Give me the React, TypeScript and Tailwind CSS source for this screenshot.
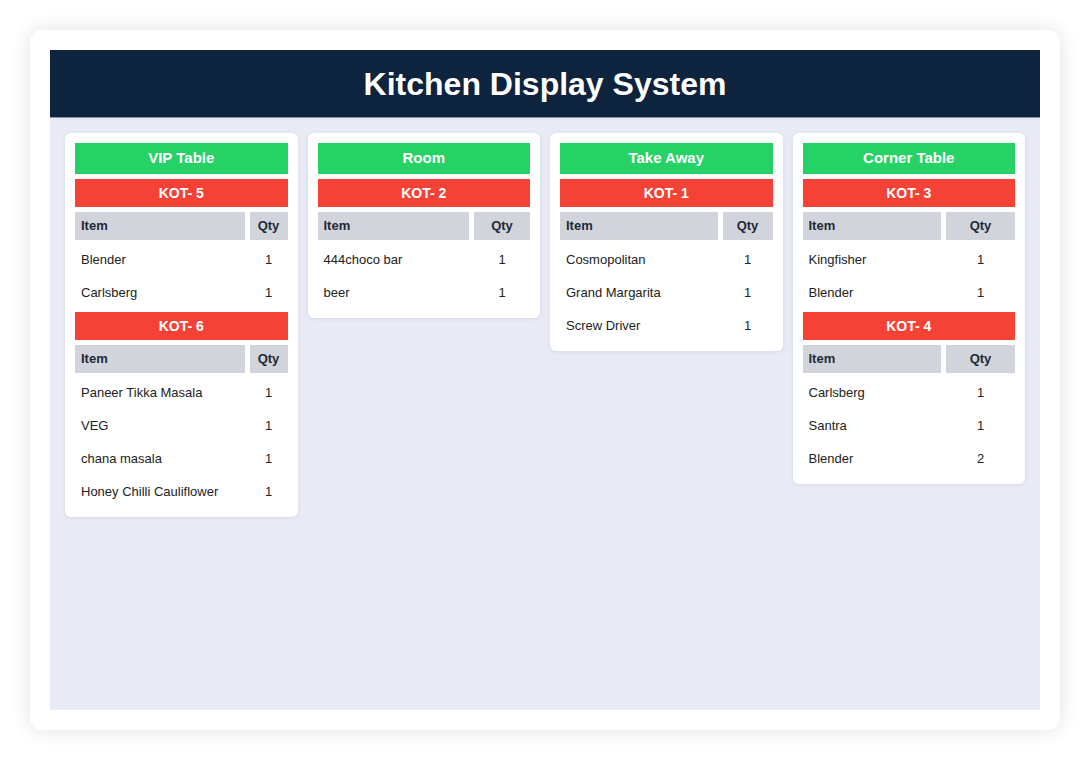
import React from 'react';

type Line = { name: string; qty: number };
type Kot = { id: number; lines: Line[] };
type Station = { title: string; qtyCol: string; kots: Kot[] };

const stations: Station[] = [
  {
    title: 'VIP Table',
    qtyCol: 'grid-cols-[1fr_38px]',
    kots: [
      { id: 5, lines: [{ name: 'Blender', qty: 1 }, { name: 'Carlsberg', qty: 1 }] },
      {
        id: 6,
        lines: [
          { name: 'Paneer Tikka Masala', qty: 1 },
          { name: 'VEG', qty: 1 },
          { name: 'chana masala', qty: 1 },
          { name: 'Honey Chilli Cauliflower', qty: 1 },
        ],
      },
    ],
  },
  {
    title: 'Room',
    qtyCol: 'grid-cols-[1fr_56px]',
    kots: [{ id: 2, lines: [{ name: '444choco bar', qty: 1 }, { name: 'beer', qty: 1 }] }],
  },
  {
    title: 'Take Away',
    qtyCol: 'grid-cols-[1fr_50px]',
    kots: [
      {
        id: 1,
        lines: [
          { name: 'Cosmopolitan', qty: 1 },
          { name: 'Grand Margarita', qty: 1 },
          { name: 'Screw Driver', qty: 1 },
        ],
      },
    ],
  },
  {
    title: 'Corner Table',
    qtyCol: 'grid-cols-[1fr_69px]',
    kots: [
      { id: 3, lines: [{ name: 'Kingfisher', qty: 1 }, { name: 'Blender', qty: 1 }] },
      {
        id: 4,
        lines: [
          { name: 'Carlsberg', qty: 1 },
          { name: 'Santra', qty: 1 },
          { name: 'Blender', qty: 2 },
        ],
      },
    ],
  },
];

function KotBlock({ kot, cols }: { kot: Kot; cols: string }) {
  return (
    <div className="flex flex-col gap-[5px]">
      <div className="h-[28px] bg-[#f44336] text-white font-bold text-[14px] flex items-center justify-center">
        KOT- {kot.id}
      </div>
      <div className={`grid ${cols} gap-[5px] text-[13px] mb-[1px]`}>
        <div className="h-[28px] bg-[#d1d5db] font-bold text-[#1f2937] flex items-center pl-[6px]">Item</div>
        <div className="h-[28px] bg-[#d1d5db] font-bold text-[#1f2937] flex items-center justify-center">Qty</div>
        {kot.lines.map((l, i) => (
          <React.Fragment key={i}>
            <div className="h-[28px] flex items-center pl-[6px] pt-[2px] text-[#222]">{l.name}</div>
            <div className="h-[28px] flex items-center justify-center pt-[2px] text-[#222]">{l.qty}</div>
          </React.Fragment>
        ))}
      </div>
    </div>
  );
}

export default function App() {
  return (
    <div className="w-[1090px] h-[760px] bg-white p-[30px] font-['Liberation_Sans',Arial,sans-serif]">
      <div className="w-full h-full bg-white rounded-[12px] shadow-[0_0_20px_rgba(0,0,0,0.12)] p-[20px]">
        <div className="w-full h-full flex flex-col">
          <header className="h-[68px] bg-[#0e233d] border-b border-[#8a93a6] flex items-center justify-center">
            <h1 className="text-white font-bold text-[32px] leading-none">Kitchen Display System</h1>
          </header>
          <main className="flex-1 bg-[#e8eaf6] px-[15px] pt-[15px] pb-[16px]">
            <div className="grid grid-cols-4 gap-[10px] items-start">
              {stations.map((s) => (
                <div
                  key={s.title}
                  className="bg-white rounded-[6px] shadow-[0_1px_4px_rgba(0,0,0,0.08)] px-[10px] pt-[10px] pb-[11px] flex flex-col gap-[5px]"
                >
                  <div className="h-[31px] bg-[#26d165] text-white font-bold text-[15px] flex items-center justify-center">
                    {s.title}
                  </div>
                  {s.kots.map((k) => (
                    <KotBlock key={k.id} kot={k} cols={s.qtyCol} />
                  ))}
                </div>
              ))}
            </div>
          </main>
        </div>
      </div>
    </div>
  );
}
